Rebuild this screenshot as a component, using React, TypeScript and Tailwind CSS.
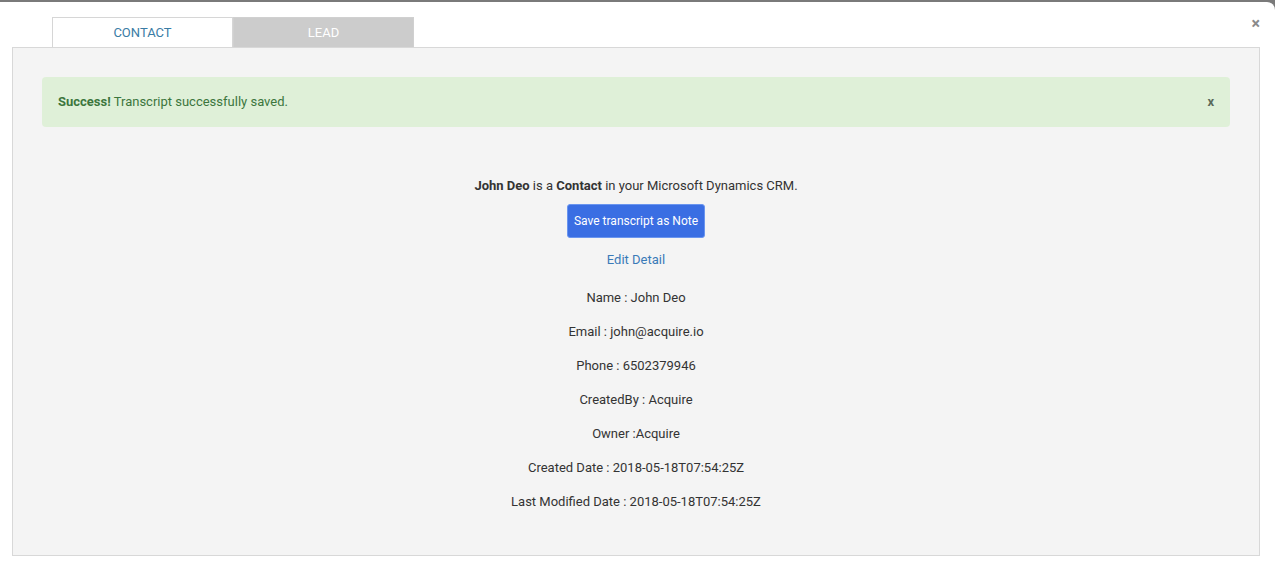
import React from "react";

export default function App() {
  const rows = [
    "Name : John Deo",
    "Email : john@acquire.io",
    "Phone : 6502379946",
    "CreatedBy : Acquire",
    "Owner :Acquire",
    "Created Date : 2018-05-18T07:54:25Z",
    "Last Modified Date : 2018-05-18T07:54:25Z",
  ];
  return (
    <div
      className="w-[1275px] h-[569px] bg-[#7a7a7a] overflow-hidden"
      style={{ fontFamily: "Roboto, 'Liberation Sans', sans-serif" }}
    >
      <div className="mt-[2px] h-[567px] bg-white rounded-tr-[8px] relative">
        <button className="absolute right-[15px] top-[14px] text-[16px] leading-none text-[#8a8a8a] font-bold">
          ×
        </button>
        <div className="pt-[15px] pl-[52px] flex">
          <div className="w-[181px] h-[30px] bg-white border border-b-0 border-[#d6d6d6] flex items-center justify-center text-[13px] text-[#3a7ca5]">
            CONTACT
          </div>
          <div className="w-[181px] h-[30px] bg-[#cccccc] border border-b-0 border-[#d0d0d0] flex items-center justify-center text-[13px] text-white">
            LEAD
          </div>
        </div>
        <div className="ml-[12px] w-[1248px] h-[509px] border border-[#d8d8d8] bg-[#f4f4f4] px-[29px] pt-[29px]">
          <div className="h-[50px] rounded-[4px] bg-[#dff0d8] text-[#3c763d] text-[13px] flex items-center justify-between pl-[16px] pr-[16px]">
            <span>
              <b>Success!</b> Transcript successfully saved.
            </span>
            <span className="font-bold text-[13px] text-[#5a6a5a]">x</span>
          </div>
          <div className="flex flex-col items-center text-[13px] text-[#333]">
            <div className="mt-[49px] h-[20px] flex items-center">
              <span>
                <b>John Deo</b> is a <b>Contact</b> in your Microsoft Dynamics CRM.
              </span>
            </div>
            <button className="mt-[8px] h-[34px] w-[138px] rounded-[3px] bg-[#3a6ee3] border border-[#6a95ef] text-white text-[12px]">
              Save transcript as Note
            </button>
            <div className="mt-[12px] h-[20px] flex items-center text-[#3a7ab8]">Edit Detail</div>
            <div className="mt-[11px] flex flex-col items-center">
              {rows.map((r) => (
                <div key={r} className="h-[34px] flex items-center">
                  {r}
                </div>
              ))}
            </div>
          </div>
        </div>
      </div>
    </div>
  );
}
